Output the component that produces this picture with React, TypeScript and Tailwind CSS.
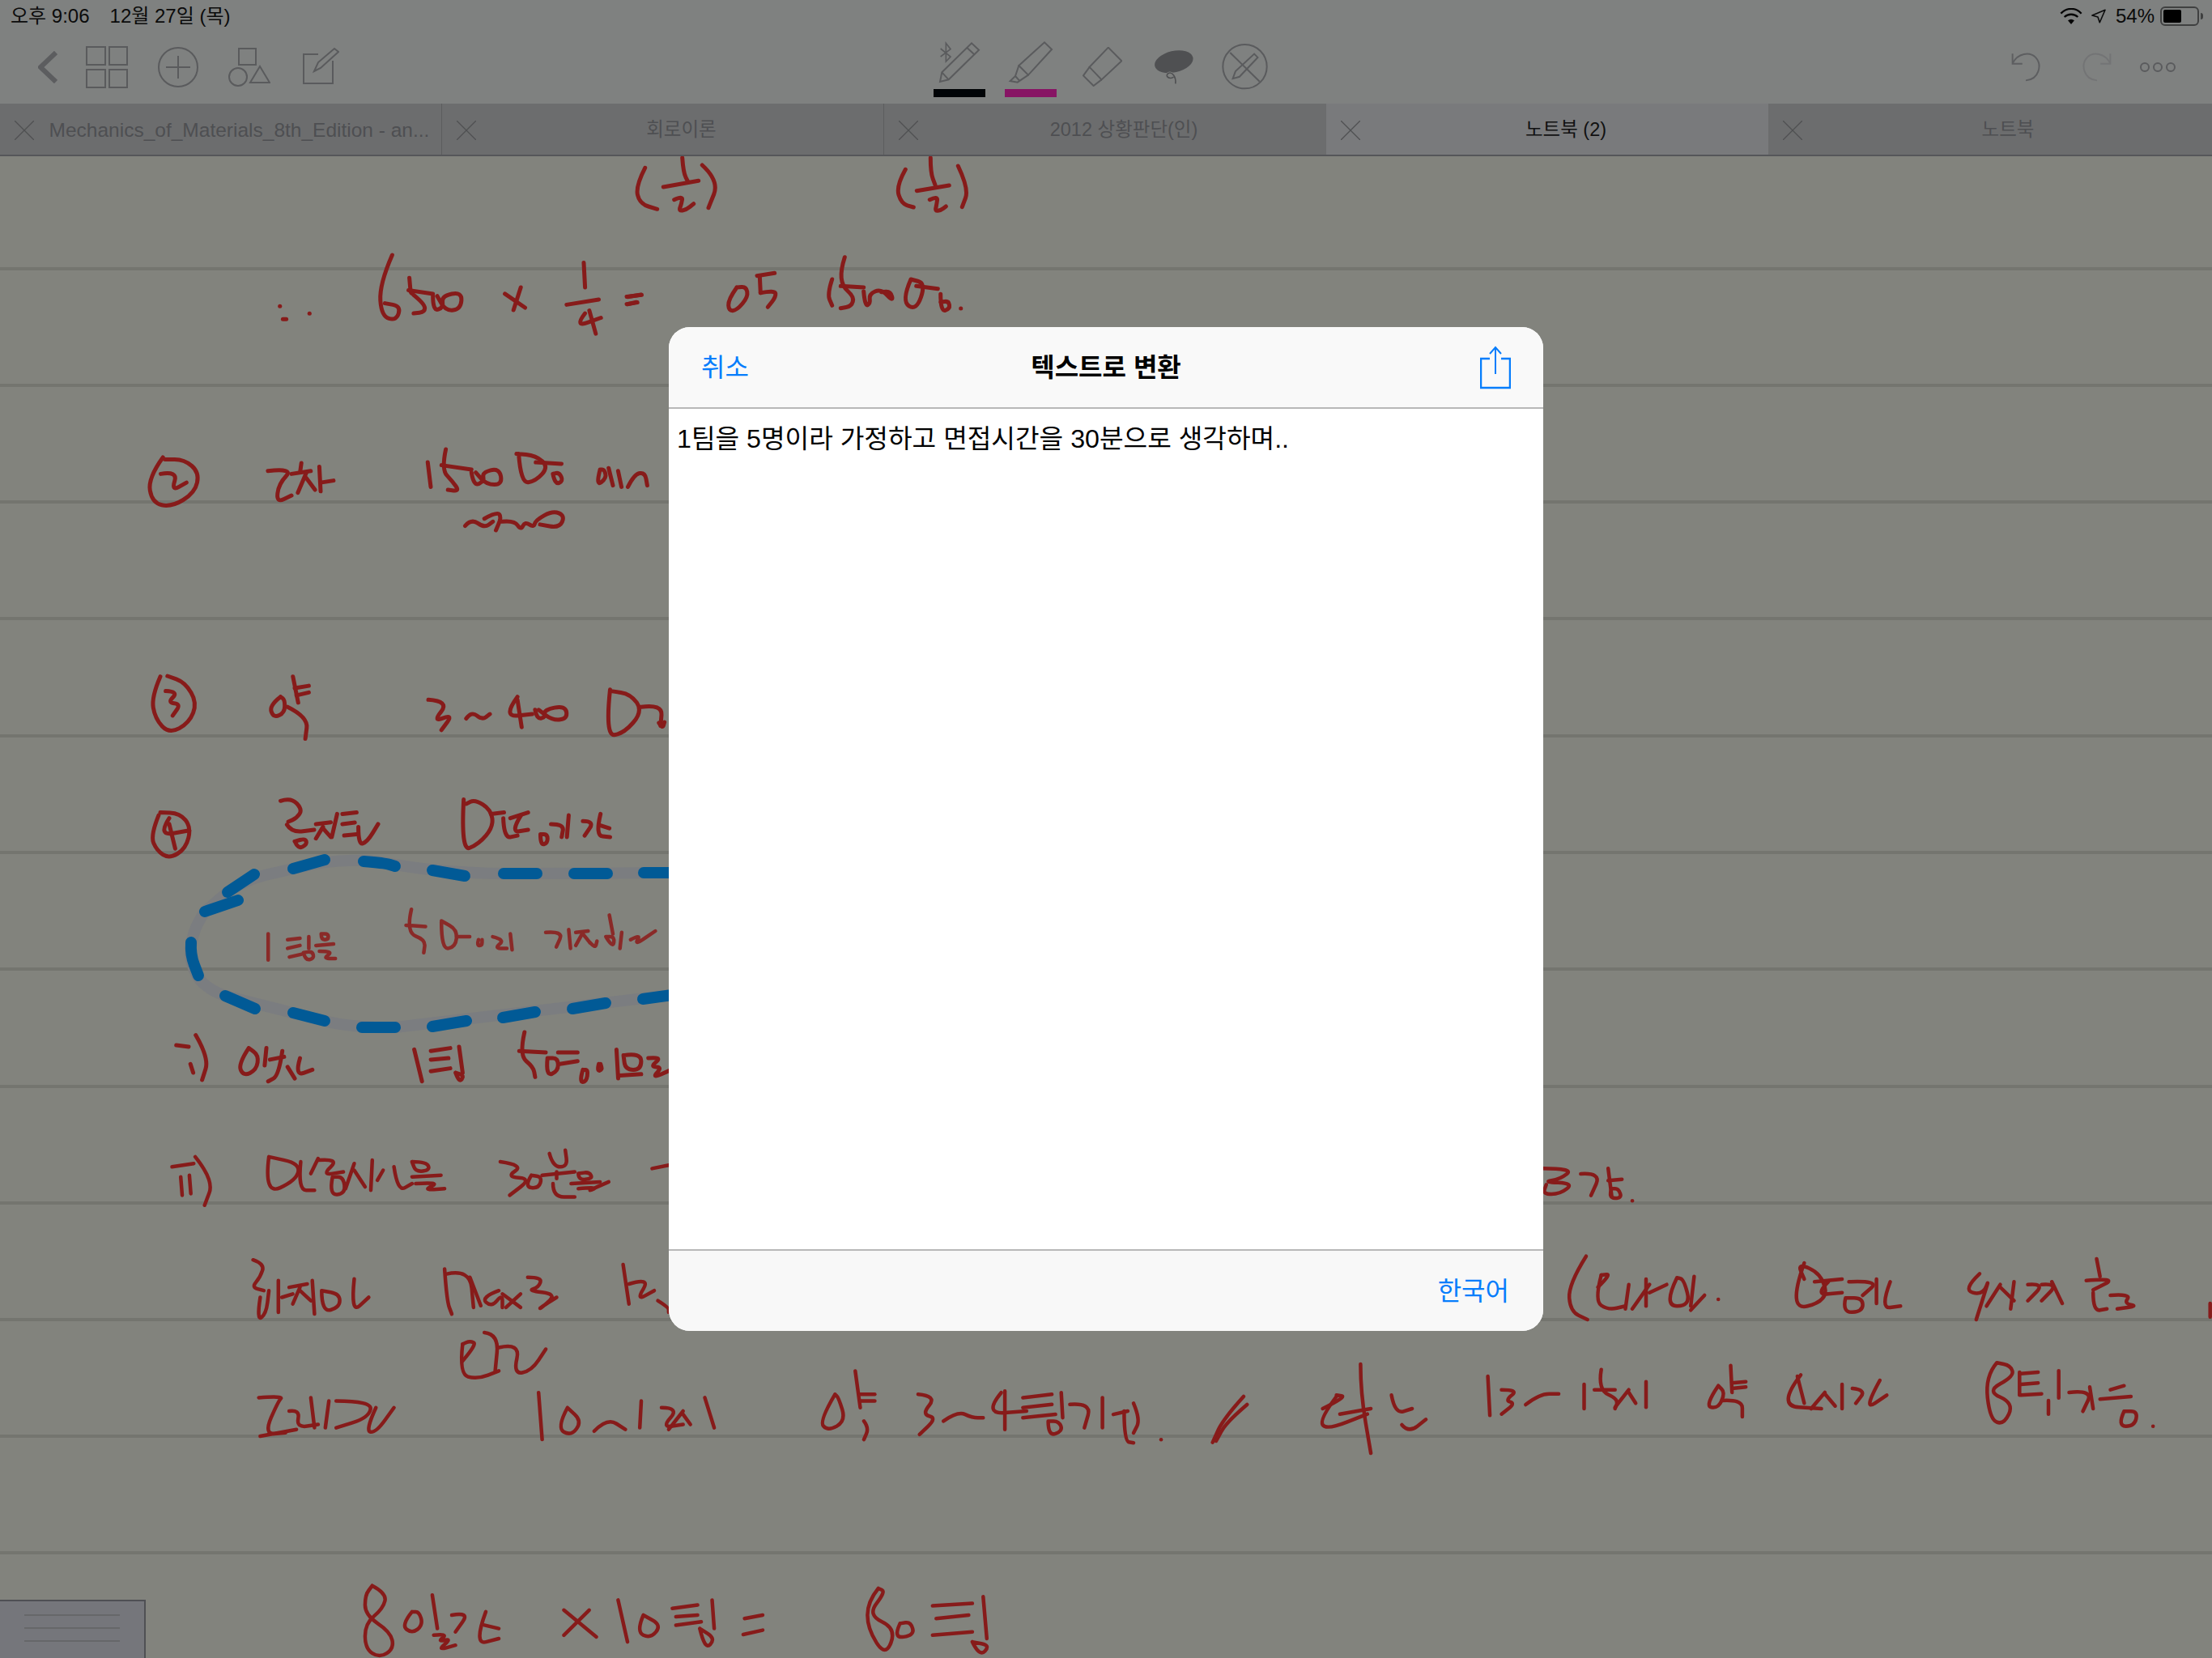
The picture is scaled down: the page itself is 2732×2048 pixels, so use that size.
import React from 'react';

const ICON = '#5a5b5d';

type Zone = { ox: number; oy: number; sx: number; sy: number; width?: number; color?: string; strokes: string[] };

// smooth a list of "x,y x,y" points into a path, in page coordinates
const inkPath = (points: string, z: Zone) => {
  const pts = points.split(' ').map((p) => {
    const [x, y] = p.split(',').map(Number);
    return [z.ox + x * z.sx, z.oy + y * z.sy];
  });
  if (pts.length === 1) return `M${pts[0][0]} ${pts[0][1]}L${pts[0][0] + 0.1} ${pts[0][1]}`;
  let d = `M${pts[0][0].toFixed(1)} ${pts[0][1].toFixed(1)}`;
  for (let i = 1; i < pts.length - 1; i++) {
    const mx = (pts[i][0] + pts[i + 1][0]) / 2;
    const my = (pts[i][1] + pts[i + 1][1]) / 2;
    d += `Q${pts[i][0].toFixed(1)} ${pts[i][1].toFixed(1)} ${mx.toFixed(1)} ${my.toFixed(1)}`;
  }
  const last = pts[pts.length - 1];
  return d + `L${last[0].toFixed(1)} ${last[1].toFixed(1)}`;
};

const ZONES: Zone[] = [
  // top fractions and first line
  {
    ox: 760, oy: 190, sx: 1 / 3, sy: 1 / 3, width: 5,
    strokes: [
      '110,52 75,120 90,185 155,205', '248,15 252,70 270,105', '178,123 308,100',
      '218,170 250,155 245,185 235,212 262,208 290,185', '322,42 385,100 345,200',
      '1075,58 1040,120 1060,185 1105,198', '1168,15 1168,70 1185,115', '1117,137 1237,117',
      '1165,170 1195,155 1190,190 1185,212 1205,210 1225,195', '1270,45 1310,130 1285,197',
      '45,530 95,522', '45,557 78,550',
      '450,495 418,540 420,582 450,580 492,530 485,492 450,495', '590,442 525,452', '535,452 538,515',
      '538,515 592,505 595,530 565,568',
      '803,465 785,520 803,562', '850,383 835,430 840,490 885,530 875,565 835,572', '835,490 920,495',
      '920,510 925,565 945,555 940,520 985,500 1030,548 1020,510 985,512',
      '1095,465 1060,545 1115,582 1150,480 1095,465', '1115,490 1195,500',
      '1205,520 1205,585 1240,575 1235,545 1205,550', '1280,573',
    ],
  },
  // 6500 x 1/4 and (2)
  {
    ox: 0, oy: 180, sx: 1 / 1.889, sy: 1 / 2.8, width: 5,
    strokes: [
      '653,555', '668,600 660,600', '722,580',
      '915,378 885,480 890,590 925,605 935,555 898,545', '955,457 958,505', '953,500 1010,512',
      '960,510 990,545 992,575 965,580', '1010,520 1010,572 1035,560 1030,520 1078,505 1075,565 1040,572 1020,520',
      '1178,512 1225,560', '1215,490 1198,568', '1362,405 1365,490', '1322,550 1397,532',
      '1365,580 1340,628 1402,595', '1375,570 1390,650', '1462,522 1497,516', '1462,548 1487,542',
      '380,1078 345,1150 355,1235 400,1250 455,1200 465,1130 430,1085 385,1085',
      '375,1135 415,1125 400,1195 435,1165',
      '625,1125 685,1115 650,1170 645,1235 680,1210',
      '703,1098 700,1130', '680,1135 725,1125', '715,1130 695,1200', '715,1150 735,1190',
      '745,1110 748,1195', '748,1165 778,1158',
      '998,1095 1005,1180', '1040,1050 1030,1120 1055,1160 1072,1195 1045,1190', '1030,1105 1100,1120',
      '1100,1130 1105,1178 1130,1160 1125,1130 1165,1115 1172,1172 1135,1172 1110,1130',
      '1210,1065 1215,1168 1250,1160 1280,1110 1250,1072 1205,1065', '1250,1095 1310,1100',
      '1290,1135 1295,1172 1314,1160 1305,1130 1290,1135',
      '1400,1120 1390,1178 1415,1150 1410,1120 1400,1120', '1420,1115 1430,1175', '1442,1125 1450,1180',
      '1465,1180 1480,1135 1505,1130 1510,1175',
      '1085,1315 1100,1290 1130,1322 1150,1300', '1130,1290 1160,1265 1170,1285 1157,1330',
      '1170,1300 1200,1295 1215,1330 1225,1300 1245,1320 1250,1295 1290,1262 1318,1280 1305,1322 1260,1310',
    ],
  },
  // (3), (4), interior of the lasso, i) row
  {
    ox: 150, oy: 800, sx: 1 / 2.29, sy: 1 / 2.8, width: 5,
    strokes: [
      '110,100 85,170 95,245 135,298 192,260 214,190 180,120 130,98', '125,150 162,152 130,190 168,195 145,235',
      '450,170 418,200 430,243 462,225 462,180 450,170', '485,100 500,190', '490,140 530,132', '495,165 530,155',
      '470,205 528,240 520,315',
      '868,180 928,185 880,258 938,230 905,285', '975,245 990,220 1020,250 1042,230',
      '1120,170 1078,240 1162,230', '1120,180 1132,275',
      '1170,215 1175,248 1200,240 1195,215 1255,200 1262,245 1220,252 1180,215',
      '1382,145 1368,305 1420,298 1475,220 1440,160 1385,150', '1470,205 1530,195 1525,270', '1520,260 1530,280 1536,258',
      '105,580 82,650 100,702 135,730 182,695 197,620 165,572 110,570', '135,590 102,652 192,632', '135,610 152,695',
      '450,530 480,518 512,560 495,590 472,602', '468,612 482,640 545,630',
      '490,670 500,697 525,680 520,660 490,670', '550,610 592,604', '570,620 550,660', '570,625 592,655',
      '610,575 595,655', '625,575 665,570', '625,610 660,605', '630,650 665,645', '670,620 670,682 695,672 726,610',
      '968,525 960,705 1010,680 1052,620 1045,560 1000,525 975,540', '1045,575 1082,570', '1080,590 1082,660 1120,650',
      '1100,590 1150,570', '1130,580 1100,640 1150,630', '1185,645 1185,682 1205,677 1205,645 1185,645',
      '1215,610 1252,610 1245,655', '1265,580 1260,655', '1305,600 1338,600 1310,650', '1355,575 1340,650 1382,655', '1355,615 1380,625',
      '155,1375 190,1380', '195,1440 203,1470', '210,1340 248,1420 228,1495',
      '360,1385 330,1440 345,1482 382,1460 388,1410 360,1385', '410,1385 405,1445', '420,1425 460,1415',
      '455,1395 445,1480 415,1500', '470,1450 490,1490', '505,1420 490,1482 540,1460',
      '828,1390 850,1500', '875,1395 930,1385', '875,1425 925,1420', '875,1465 930,1455', '955,1380 965,1470', '945,1470 955,1505 970,1480 945,1470',
      '1140,1330 1125,1410 1165,1450 1170,1485', '1125,1395 1200,1400', '1205,1420 1200,1482 1235,1465 1235,1420 1205,1420',
      '1235,1400 1290,1400', '1240,1440 1290,1430', '1305,1460 1295,1502 1315,1502 1320,1460 1305,1460',
      '1350,1440 1345,1465 1360,1460 1355,1440', '1400,1390 1405,1490', '1420,1410 1470,1400 1470,1460 1425,1460 1420,1410',
      '1410,1480 1470,1475', '1490,1420 1530,1415 1495,1450 1530,1450 1500,1490 1555,1460',
    ],
  },
  // softer ink in the lasso
  {
    ox: 150, oy: 800, sx: 1 / 2.29, sy: 1 / 2.8, width: 4.5, color: '#8a2a28',
    strokes: [
      '415,990 415,1080', '470,1010 505,1005', '470,1040 505,1030', '475,1070 510,1060', '530,1000 530,1040',
      '515,1055 520,1082 545,1075 540,1050 515,1055', '565,990 565,1010 585,1010 585,990 565,990', '550,1030 600,1025',
      '560,1050 600,1050 570,1075 605,1075',
      '820,905 805,985 860,1010 855,1055', '805,960 860,965', '905,950 905,1045 945,1035 950,975 905,945', '950,1000 985,1000',
      '1010,1010 1005,1030 1020,1030 1020,1010', '1050,1000 1085,1010 1055,1040 1090,1040', '1100,990 1105,1045',
      '1200,985 1250,980 1230,1035', '1265,975 1270,1040', '1285,985 1320,980', '1305,985 1285,1030', '1305,990 1325,1020',
      '1325,1020 1340,1040 1345,1015', '1380,925 1390,990', '1370,1000 1390,1040 1395,1000 1370,1000', '1415,985 1410,1040',
      '1440,1010 1470,990 1450,1030 1510,980',
    ],
  },
  // left half of the lower rows
  {
    ox: 0, oy: 1400, sx: 1 / 1.12, sy: 1 / 2.42, width: 4.5,
    strokes: [
      '238,100 268,90', '250,130 252,185', '262,125 264,180', '270,70 296,140 283,215',
      '372,70 365,185 410,140 415,90 372,70', '416,85 412,170 435,170', '440,75 430,120', '440,80 470,75 445,125 475,115',
      '460,130 455,185 478,180 475,130 460,130', '490,90 478,165', '490,110 505,160', '515,80 513,170', '530,110 522,140',
      '545,100 550,175 570,150', '570,85 590,85 595,110 575,115 570,85', '570,130 610,125', '575,150 610,145 585,170 615,165',
      '692,85 725,95 700,130 735,135 705,185', '735,125 725,160 745,165 750,130 735,125', '760,60 765,100 785,100 782,50',
      '750,125 795,115', '770,115 770,135', '765,150 765,190 795,190', '800,120 800,140 820,135 815,115 800,120',
      '790,150 830,145', '800,165 830,160 810,175 842,145', '902,105 925,95',
      '350,378 366,390 360,430 348,460 365,470', '360,490 355,560 368,540 372,470', '385,440 385,535', '390,490 405,480',
      '400,460 425,450', '415,460 405,510', '415,470 430,500', '432,440 435,540', '445,470 445,535 470,520 470,480 445,470',
      '490,435 485,540 510,490',
      '615,405 618,500 625,540', '618,420 650,405 655,520', '650,430 665,515', '690,470 665,490 680,520 695,480 695,520',
      '695,480 720,520', '720,480 700,520', '730,430 750,430 745,460 730,470 770,480 750,520 745,525 770,490',
      '862,392 870,510', '870,450 900,430 880,500 905,470', '910,500 925,520 925,535',
      '640,630 635,720 660,735 690,710', '640,680 660,630 650,620 640,630', '670,595 690,600 685,710', '690,640 720,625 710,720 735,710 755,645',
      '358,790 392,785 385,800 365,900 395,895', '360,905 410,885', '400,830 415,825 410,880 440,870', '430,790 435,880', '455,800 450,880',
      '465,800 515,800 510,850 465,880', '520,820 505,890 520,895 545,820',
      '745,775 750,915', '785,820 770,880 790,905 805,860 785,820', '822,890 840,850 865,885', '887,800 885,880',
      '915,820 940,820 915,880 945,870', '945,830 925,885', '945,840 955,870', '975,790 988,880',
      '1155,780 1133,860 1145,890 1170,860 1160,790 1155,780', '1183,710 1190,820', '1190,780 1210,780', '1190,800 1210,800', '1195,860 1202,880 1195,915',
      '1270,780 1296,785 1275,840 1296,850 1272,900', '1305,860 1325,830 1345,850 1360,850', '1385,775 1360,840 1420,830', '1390,770 1390,885',
      '1415,790 1455,780', '1415,820 1455,810', '1415,850 1460,840', '1468,775 1470,850', '1450,860 1450,905 1470,890 1465,860 1450,860',
      '1480,810 1510,805 1500,880', '1525,790 1525,880', '1540,840 1560,830', '1555,830 1555,920 1568,925',
      '515,1352 535,1375 530,1420 505,1465 505,1540 525,1568 545,1540 540,1490 505,1440 505,1380 515,1352',
      '570,1430 555,1470 570,1495 585,1470 580,1430 570,1430', '598,1380 605,1480', '600,1500 620,1495 605,1520 625,1510 605,1545 630,1530',
      '625,1440 650,1430 630,1490', '672,1430 655,1530 690,1510', '670,1470 690,1480',
      '780,1425 825,1505', '815,1425 780,1500', '855,1395 868,1520', '890,1440 880,1490 900,1510 915,1470 890,1440',
      '930,1420 965,1410', '935,1445 965,1440', '935,1470 970,1460', '985,1395 988,1480', '968,1480 975,1545 990,1510 968,1480',
      '1030,1450 1055,1440', '1028,1498 1055,1485',
      '1215,1360 1200,1400 1200,1480 1225,1565 1240,1480 1200,1440 1225,1370 1215,1360', '1245,1465 1235,1510 1265,1500 1260,1460 1245,1465',
      '1290,1412 1345,1405', '1295,1450 1340,1440', '1290,1500 1345,1490', '1360,1385 1365,1510', '1345,1520 1355,1565 1370,1530 1345,1520',
    ],
  },
  // right of the dialog
  {
    ox: 1400, oy: 1400, sx: 1 / 1.177, sy: 1 / 3, width: 4.5,
    strokes: [
      '595,130 640,130 620,170 595,180 640,185 620,225 595,225 600,190', '650,150 680,145 665,230', '690,130 695,230',
      '690,175 710,170', '695,205 690,240 710,240 705,205 695,205', '725,250',
      '658,455 632,560 635,660 660,690',
      '680,525 670,620 690,655 715,640', '675,570 695,520 680,525', '720,560 715,650', '745,540 745,640', '750,560 725,650', '750,590 775,560',
      '790,535 770,640 810,640 800,540 790,535', '815,530 810,640', '830,600 810,655', '850,615',
      '975,480 950,660 1010,620 1000,520 965,480 975,540', '990,550 1030,540', '1010,550 990,600 1030,590',
      '1035,610 1030,665 1060,660 1060,610 1035,610', '1040,550 1085,545 1060,600', '1080,540 1080,630', '1100,550 1085,650 1115,640',
      '1230,520 1205,580 1235,600 1245,530 1225,690', '1260,560 1240,640', '1260,570 1280,620', '1280,550 1275,650',
      '1300,560 1325,555 1300,620', '1320,560 1345,555 1320,620', '1335,550 1350,630',
      '1400,465 1405,530', '1385,545 1430,535 1395,580', '1395,590 1395,660 1415,650', '1420,600 1450,595 1440,630 1460,640 1430,650',
      '1565,630 1565,680',
      '0,1000 10,1060 0,1110', '40,1135',
      '160,975 130,1060 115,1145', '165,1005 135,1070 120,1140',
      '295,975 270,1060 280,1100 340,1040', '275,1020 310,975 295,970', '330,855 330,960 345,1185', '300,1040 345,1020',
      '375,970 380,1040 405,1020', '390,1080 400,1110 425,1060',
      '515,900 518,1045', '535,950 560,950 540,990 555,1000 535,1040', '570,1005 590,965 618,965', '655,930 655,1020',
      '680,875 675,950 705,985 700,1020', '670,950 700,950', '720,950 700,1015', '720,960 730,1000', '745,920 745,1015',
      '850,935 830,1010 850,1020 860,960 850,935', '868,860 870,960', '870,925 890,920', '870,945 890,940', '855,990 885,985 885,1050',
      '970,895 935,1010 1000,1020', '965,900 975,1000', '1005,960 985,1020', '1005,965 1020,1010', '1030,930 1030,1020',
      '1045,945 1065,950 1050,1000', '1085,915 1060,1030 1095,970',
      '1255,850 1238,900 1245,1060 1265,1080 1280,1000 1240,955 1280,900 1275,860 1255,850', '1290,890 1315,885', '1290,930 1315,925', '1290,970 1320,965', '1288,885 1288,970',
      '1345,880 1345,980', '1330,990 1330,1040', '1360,960 1395,950 1380,1030', '1390,940 1395,1020', '1420,950 1440,935', '1405,985 1450,975',
      '1440,1030 1430,1085 1455,1085 1460,1030 1440,1030', '1482,1085',
    ],
  },
];

const LASSO_DASHES = [
  '253,1126 294,1112', '281,1102 314,1080', '362,1073 401,1062', '449,1064 475,1066 488,1070', '534,1075 574,1082',
  '622,1079 663,1079', '709,1079 750,1079', '795,1078 826,1078', '236,1164 235,1179 245,1205', '278,1230 315,1246',
  '362,1251 401,1261', '447,1269 488,1269', '534,1268 576,1261', '621,1257 661,1250', '707,1246 748,1239', '794,1234 830,1229',
];

const IDENTITY: Zone = { ox: 0, oy: 0, sx: 1, sy: 1, strokes: [] };
const RULES = [332, 476, 620, 764, 909, 1053, 1197, 1342, 1486, 1630, 1774, 1918];

const TABS = [
  { label: 'Mechanics_of_Materials_8th_Edition - an...', latin: true, divider: true },
  { label: '회로이론', divider: true },
  { label: '2012 상황판단(인)' },
  { label: '노트북 (2)', active: true },
  { label: '노트북' },
];

const Canvas = () => (
  <svg className="absolute inset-0 h-full w-full" viewBox="0 193 2732 1855">
    {RULES.map((y) => (
      <rect key={y} x="0" y={y - 2} width="2732" height="4" fill="#74756f" />
    ))}
    {ZONES.map((z, i) => (
      <g key={i} fill="none" stroke={z.color ?? '#871b1a'} strokeWidth={z.width} strokeLinecap="round" strokeLinejoin="round">
        {z.strokes.map((s, j) => (
          <path key={j} d={inkPath(s, z)} />
        ))}
      </g>
    ))}
    <path
      d="M830 1078L663 1079C600 1080 540 1077 488 1068C450 1060 410 1060 362 1073C335 1080 314 1080 281 1102L253 1126C240 1145 236 1160 235 1179C238 1205 250 1220 278 1230L401 1261C425 1268 470 1270 488 1269L830 1229"
      fill="none"
      stroke="#7b7d80"
      strokeWidth="14"
    />
    <g fill="none" stroke="#015a96" strokeWidth="14" strokeLinecap="round" strokeLinejoin="round">
      {LASSO_DASHES.map((s) => (
        <path key={s} d={inkPath(s, IDENTITY)} />
      ))}
    </g>
  </svg>
);

const CloseX = () => (
  <svg className="absolute left-[18px] top-[21px] h-[24px] w-[24px]" viewBox="0 0 24 24" fill="none" stroke="#4f5052" strokeWidth="1.3">
    <path d="M0 0L24 24M24 0L0 24" />
  </svg>
);

const StatusBar = () => (
  <div className="flex h-[38px] items-center justify-between bg-[#7f8180] pl-[13px] pr-[11px] pt-[2px] text-[24px] text-[#0b0b0b]">
    <div className="flex gap-[25px]">
      <span>오후 9:06</span>
      <span>12월 27일 (목)</span>
    </div>
    <div className="flex items-center">
      <svg className="h-[20px] w-[28px]" viewBox="730 30 82 60" fill="none" stroke="#050505" strokeWidth="7">
        <path d="M733 50C755 27 788 27 809 50M746 63C760 50 782 50 796 63" />
        <path d="M759 76L771 90L783 76C775 70 767 70 759 76Z" fill="#050505" stroke="none" />
      </svg>
      <svg className="ml-[11px] h-[18px] w-[18px]" viewBox="846 36 56 54" fill="none" stroke="#0b0b0b" strokeWidth="5">
        <path d="M849 60L899 39L878 87L871 66Z" strokeLinejoin="round" />
      </svg>
      <span className="ml-[12px]">54%</span>
      <div className="ml-[7px] flex h-[24px] w-[48px] items-center rounded-[6px] border-2 border-[#3f4040] p-[2px]">
        <div className="h-full w-[22px] rounded-[2px] bg-black" />
      </div>
      <div className="ml-[2px] h-[8px] w-[3px] rounded-r-full bg-[#3f4040]" />
    </div>
  </div>
);

const LeftTools = () => (
  <div className="flex items-center pl-[47px]">
    <svg className="h-[40px] w-[24px]" viewBox="47 63 24 40" fill="none" stroke="#5c5d5f" strokeWidth="6">
      <path d="M69 65L50 83L69 101" />
    </svg>
    <svg className="ml-[35px] h-[52px] w-[52px]" viewBox="106 57 52 52" fill="none" stroke={ICON} strokeWidth="2">
      <path d="M107 58H130V80H107ZM135 58H157V80H135ZM107 86H130V108H107ZM135 86H157V108H135Z" />
    </svg>
    <svg className="ml-[37px] h-[50px] w-[50px]" viewBox="195 58 50 50" fill="none" stroke={ICON} strokeWidth="2">
      <circle cx="220" cy="83" r="24" />
      <path d="M205 83H235M220 69V97" />
    </svg>
    <svg className="ml-[37px] h-[50px] w-[52px]" viewBox="282 58 52 50" fill="none" stroke={ICON} strokeWidth="2">
      <path d="M295 60H316V80H295Z" />
      <circle cx="294" cy="95" r="11" />
      <path d="M321 82L333 102H309Z" />
    </svg>
    <svg className="mb-[4px] ml-[40px] h-[46px] w-[45px]" viewBox="374 58 45 46" fill="none" stroke={ICON} strokeWidth="2">
      <path d="M393 67H375V103H411V75" />
      <path d="M388 88L393 77L413 60L418 64L396 84Z" />
    </svg>
  </div>
);

const CenterTools = () => (
  <div className="ml-[734px] flex items-start">
    <div className="flex w-[64px] flex-col pt-[12px]">
      <svg className="h-[55px] w-[64px]" viewBox="159 90 192 165" fill="none" stroke={ICON} strokeWidth="6">
        <path d="M183 243L190 208L300 100L327 125L215 235Z" />
        <path d="M190 208L215 235M283 117L310 142" />
        <path d="M185 120L222 150L205 168V100L222 122L185 150" strokeWidth="5" />
      </svg>
      <div className="mt-[5px] h-[10px] bg-[#010407]" />
    </div>
    <div className="ml-[24px] flex w-[64px] flex-col pt-[12px]">
      <svg className="h-[55px] w-[64px]" viewBox="423 90 192 165" fill="none" stroke={ICON} strokeWidth="6">
        <path d="M475 183L570 97L597 123L510 218Z" />
        <path d="M475 183L462 222L443 240L470 245L510 218M462 222L480 242" />
      </svg>
      <div className="mt-[5px] h-[10px] bg-[#871464]" />
    </div>
    <svg className="ml-[32px] mt-[20px] h-[49px] w-[49px]" viewBox="709 115 148 148" fill="none" stroke={ICON} strokeWidth="6">
      <path d="M805 117L855 167L780 237L735 190Z" />
      <path d="M735 190L712 222L750 260L780 237" />
    </svg>
    <svg className="ml-[40px] mt-[24px] h-[42px] w-[48px]" viewBox="975 125 145 127" fill="none">
      <ellipse cx="1047" cy="168" rx="73" ry="40" transform="rotate(-13 1047 168)" fill="#4f5052" />
      <path d="M1053 250C1056 225 1040 203 1025 212C1013 222 1030 236 1046 225" stroke="#808280" strokeWidth="9" />
      <path d="M1053 250C1056 225 1040 203 1025 212C1013 222 1030 236 1046 225" stroke="#4f5052" strokeWidth="5" />
    </svg>
    <svg className="ml-[35px] mt-[16px] h-[57px] w-[57px]" viewBox="1224 102 172 172" fill="none" stroke={ICON} strokeWidth="6">
      <circle cx="1310" cy="187" r="82" />
      <path d="M1255 135L1365 243" />
      <path d="M1265 232L1275 205L1345 140L1358 153L1290 225Z" />
    </svg>
  </div>
);

const RightTools = () => (
  <div className="ml-auto flex items-center pr-[45px]">
    <svg className="h-[36px] w-[36px]" viewBox="550 195 110 108" fill="none" stroke="#5d5e60" strokeWidth="6">
      <path d="M555 235C575 195 620 190 642 212C668 240 655 295 605 299M555 198V236H592" />
    </svg>
    <svg className="ml-[52px] h-[36px] w-[36px]" viewBox="815 195 110 108" fill="none" stroke="#737475" strokeWidth="6">
      <path d="M920 235C900 195 855 190 833 212C807 240 820 295 870 299M920 198V236H883" />
    </svg>
    <svg className="ml-[35px] h-[12px] w-[44px]" viewBox="0 0 44 12" fill="none" stroke="#5a5b5d" strokeWidth="2">
      <circle cx="6" cy="6" r="5" />
      <circle cx="22" cy="6" r="5" />
      <circle cx="38" cy="6" r="5" />
    </svg>
  </div>
);

const ShareIcon = () => (
  <svg className="h-[54px] w-[38px]" viewBox="0 0 38 54" fill="none" stroke="#067dfc" strokeWidth="2">
    <path d="M12 16H1V52H37V16H26" strokeWidth="2.5" />
    <path d="M19 35V2M12 10L19 2L26 10" />
  </svg>
);

const ConvertDialog = () => (
  <div className="absolute inset-0 flex items-center justify-center">
    <div className="flex h-[1240px] w-[1080px] flex-col overflow-hidden rounded-[26px] bg-white text-[32px]">
      <div className="relative flex h-[101px] shrink-0 items-center justify-between border-b-2 border-[#b8b8b8] bg-[#f9f9f9] pl-[40px] pr-[40px]">
        <span className="text-[#067dfc]">취소</span>
        <span className="absolute left-0 right-0 text-center font-semibold text-black">텍스트로 변환</span>
        <ShareIcon />
      </div>
      <div className="flex-1 px-[10px] pt-[12px] text-[32.2px] leading-[50px] text-black">1팀을 5명이라 가정하고 면접시간을 30분으로 생각하며..</div>
      <div className="flex h-[101px] shrink-0 items-center justify-end border-t-2 border-[#b8b8b8] bg-[#f8f8f8] pr-[42px] text-[#067dfc]">
        한국어
      </div>
    </div>
  </div>
);

export default function App() {
  return (
    <div className="relative flex h-[2048px] w-[2732px] flex-col overflow-hidden bg-[#82837d] font-['Liberation_Sans','Noto_Sans_CJK_KR',sans-serif]">
      <StatusBar />
      <div className="flex h-[90px] items-center bg-[#7f8180]">
        <LeftTools />
        <div className="self-start">
          <CenterTools />
        </div>
        <RightTools />
      </div>
      <div className="flex h-[65px] border-b-2 border-[#55565a] bg-[#6c6d6e] text-[23.5px]">
        {TABS.map((tab) => (
          <div
            key={tab.label}
            className={`relative flex w-[546px] shrink-0 items-center justify-center whitespace-nowrap pl-[58px] pr-[12px] pt-[3px] ${
              tab.divider ? 'border-r border-[#5c5d5e]' : ''
            } ${tab.active ? 'bg-[#797a7c] text-[#111111]' : 'text-[#4e4f52]'}`}
          >
            <CloseX />
            <span className={tab.latin ? 'text-[24.5px]' : ''}>{tab.label}</span>
          </div>
        ))}
      </div>
      <div className="relative flex-1">
        <Canvas />
        <div className="absolute bottom-0 left-0 flex h-[72px] w-[180px] flex-col gap-[14px] border-r-2 border-t-2 border-[#4f5054] bg-[#75767b] px-[30px] pt-[16px]">
          <div className="h-[2px] bg-[#666769]" />
          <div className="h-[2px] bg-[#666769]" />
          <div className="h-[2px] bg-[#666769]" />
        </div>
      </div>
      <ConvertDialog />
    </div>
  );
}
